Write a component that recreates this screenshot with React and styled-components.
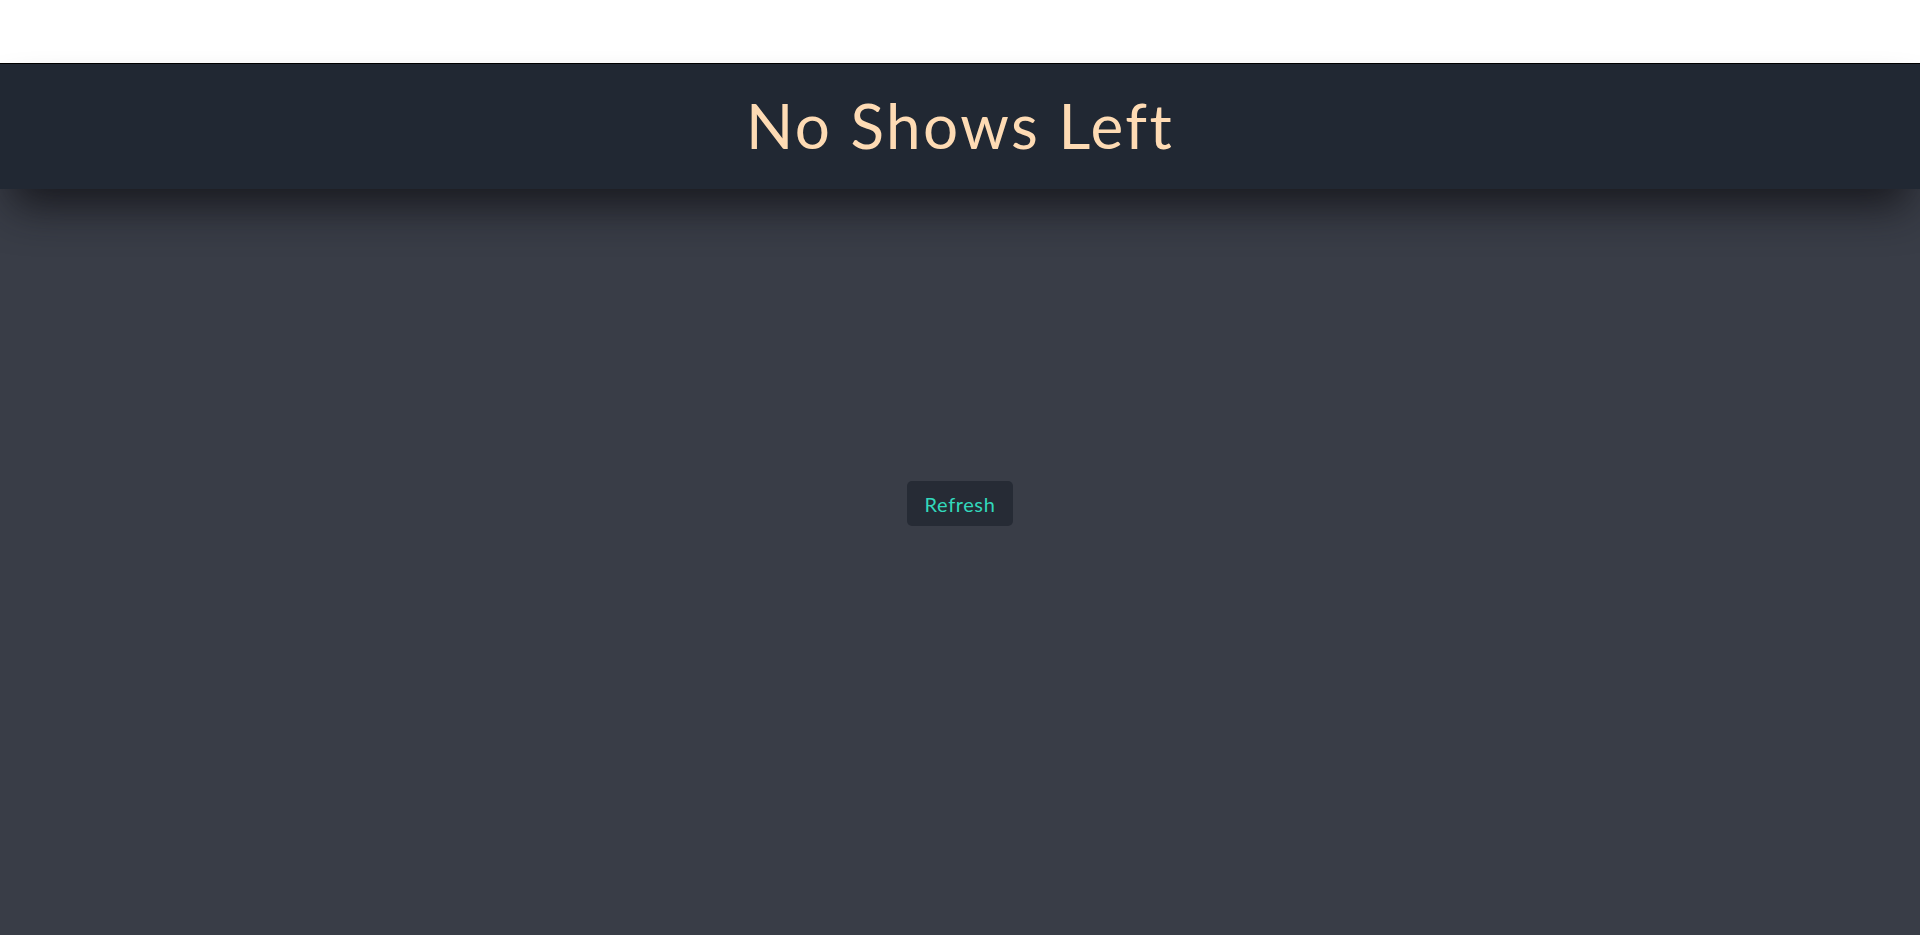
import React from "react";
import styled, { createGlobalStyle } from "styled-components";

const GlobalStyle = createGlobalStyle`
  html, body {
    margin: 0;
    padding: 0;
    background-color: #393d47;
    font-family: Lato, "Open Sans", sans-serif;
  }
  * {
    box-sizing: border-box;
  }
`;

const Page = styled.div`
  min-height: 935px;
  display: flex;
  flex-direction: column;
  background-color: #393d47;
`;

const TopBar = styled.div`
  height: 63px;
  background-color: #ffffff;
`;

const Header = styled.header`
  position: relative;
  z-index: 1;
  height: 126px;
  display: flex;
  align-items: center;
  justify-content: center;
  background-color: #212833;
  border-top: 1px solid #000;
  box-shadow: 0 28px 44px -12px rgba(18, 18, 22, 0.85);
  & h1 {
    margin: 0;
    padding-bottom: 4px;
    font-family: Lato, "Open Sans", sans-serif;
    font-weight: 400;
    font-size: 62px;
    letter-spacing: 2.4px;
    color: #fedbb4;
  }
`;

const Main = styled.main`
  flex: 1;
  display: flex;
  justify-content: center;
  align-items: flex-start;
  padding-top: 292px;
`;

const Button = styled.button`
  width: 106px;
  height: 45px;
  border: none;
  border-radius: 5px;
  background-color: #262b35;
  color: #32d8bc;
  font-family: Lato, "Open Sans", sans-serif;
  font-weight: 400;
  font-size: 20px;
  letter-spacing: 0.6px;
  cursor: pointer;
`;

export default function App() {
  return (
    <>
      <GlobalStyle />
      <Page>
        <TopBar />
        <Header>
          <h1>No Shows Left</h1>
        </Header>
        <Main>
          <Button>Refresh</Button>
        </Main>
      </Page>
    </>
  );
}
